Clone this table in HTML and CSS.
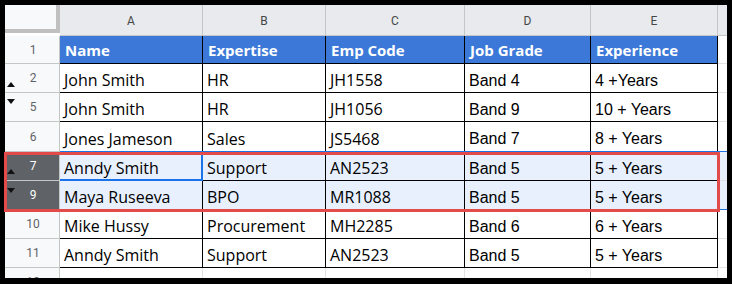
FILE: index.html
```html
<!DOCTYPE html>
<html>
<head>
<meta charset="utf-8">
<link rel="stylesheet" href="styles.css">
</head>
<body>
<div class="frame">
  <div class="sheet">
    <div class="grid">
      <div class="corner"></div>
      <div class="ch">A</div><div class="ch">B</div><div class="ch">C</div><div class="ch">D</div><div class="ch">E</div><div class="ch last"></div>

      <div class="rh">1</div>
      <div class="th">Name</div><div class="th">Expertise</div><div class="th">Emp Code</div><div class="th">Job Grade</div><div class="th">Experience</div><div class="x"></div>

      <div class="rh"><span class="tri up t2"></span>2</div>
      <div class="c">John Smith</div><div class="c">HR</div><div class="c">JH1558</div><div class="c ar">Band 4</div><div class="c ar">4 +Years</div><div class="x"></div>

      <div class="rh"><span class="tri down t5"></span>5</div>
      <div class="c">John Smith</div><div class="c">HR</div><div class="c">JH1056</div><div class="c ar">Band 9</div><div class="c ar">10 + Years</div><div class="x"></div>

      <div class="rh">6</div>
      <div class="c">Jones Jameson</div><div class="c">Sales</div><div class="c">JS5468</div><div class="c ar">Band 7</div><div class="c ar">8 + Years</div><div class="x"></div>

      <div class="rh sel"><span class="tri up t7"></span>7</div>
      <div class="c s active">Anndy Smith</div><div class="c s">Support</div><div class="c s">AN2523</div><div class="c ar s">Band 5</div><div class="c ar s">5 + Years</div><div class="x s"></div>

      <div class="rh sel"><span class="tri down t9"></span>9</div>
      <div class="c s">Maya Ruseeva</div><div class="c s">BPO</div><div class="c s">MR1088</div><div class="c ar s">Band 5</div><div class="c ar s">5 + Years</div><div class="x s"></div>

      <div class="rh">10</div>
      <div class="c">Mike Hussy</div><div class="c">Procurement</div><div class="c">MH2285</div><div class="c ar">Band 6</div><div class="c ar">6 + Years</div><div class="x"></div>

      <div class="rh">11</div>
      <div class="c">Anndy Smith</div><div class="c">Support</div><div class="c">AN2523</div><div class="c ar">Band 5</div><div class="c ar">5 + Years</div><div class="x"></div>

      <div class="rh">12</div>
      <div class="e"></div><div class="e"></div><div class="e"></div><div class="e"></div><div class="e"></div><div class="x"></div>
    </div>
    <div class="selection"></div>
  </div>
  <div class="highlight"></div>
</div>
</body>
</html>
```

FILE: styles.css
```css
html, body {
  margin: 0;
  padding: 0;
  background: #000;
}

.frame {
  position: relative;
  width: 732px;
  height: 284px;
  box-sizing: border-box;
  padding: 5px 5px 6px 5px;
  background: #000;
}

.sheet {
  position: relative;
  width: 722px;
  height: 273px;
  overflow: hidden;
  background: #fff;
}

.grid {
  display: grid;
  grid-template-columns: 55px 143px 123px 139px 126px 127px 9px;
  grid-template-rows: 31px 28px 29px 29px 30px 29px 29px 29px 29px 29px;
}

.grid > div {
  box-sizing: border-box;
}

.corner {
  background: #f8f9fa;
  border-right: 4px solid #c0c0c0;
  border-bottom: 4px solid #c0c0c0;
  margin-bottom: 3px;
}

.ch {
  display: flex;
  align-items: center;
  justify-content: center;
  background: #e8eaed;
  border-right: 1px solid #c4c7c5;
  border-bottom: 1px solid #c4c7c5;
  font-family: Roboto, "Liberation Sans", sans-serif;
  font-size: 12px;
  color: #444746;
  padding-top: 1px;
}

.ch.last {
  border-right: none;
}

.rh {
  position: relative;
  display: flex;
  align-items: center;
  justify-content: center;
  background: #f8f9fa;
  border-right: 1px solid #c4c7c5;
  border-bottom: 1px solid #c4c7c5;
  font-family: Roboto, "Liberation Sans", sans-serif;
  font-size: 12px;
  color: #5f6368;
  padding-left: 2px;
}

.rh.sel {
  background: #5f6368;
  color: #fff;
}

.tri {
  position: absolute;
  left: 2px;
  width: 0;
  height: 0;
  border-left: 4px solid transparent;
  border-right: 4px solid transparent;
}

.tri.up {
  border-bottom: 5px solid #111;
}

.tri.down {
  border-top: 5px solid #111;
}

.t2 { top: 18px; }
.t5 { top: 6px; }
.t7 { top: 17px; }
.t9 { top: 7px; }

.th {
  display: flex;
  align-items: center;
  padding: 1px 0 0 5px;
  background: #3c78d8;
  border-right: 1px solid #000;
  border-bottom: 1px solid #000;
  font-family: "Open Sans", Lato, sans-serif;
  font-weight: 700;
  font-size: 15px;
  color: #fff;
}

.c {
  display: flex;
  align-items: center;
  padding: 4px 0 0 4px;
  background: #fff;
  border-right: 1px solid #000;
  border-bottom: 1px solid #000;
  font-family: "Open Sans", Lato, sans-serif;
  font-size: 16px;
  color: #000;
  white-space: nowrap;
}

.c.ar {
  font-family: "Liberation Sans", Arial, sans-serif;
  font-size: 16px;
  padding-top: 5px;
}

.c.s, .x.s {
  background: #e8f0fe;
}

.c.active {
  border-right-color: #1a73e8;
  border-bottom-color: #1a73e8;
  box-shadow: inset -1px -1px 0 #1a73e8;
}

.e {
  border-right: 1px solid #e2e3e3;
  border-bottom: 1px solid #e2e3e3;
}

.x {
  background: #fff;
  border-bottom: 1px solid #e2e3e3;
}

.selection {
  position: absolute;
  left: 55px;
  right: 0;
  top: 146px;
  height: 59px;
  box-sizing: border-box;
  border-top: 1px solid #1a73e8;
  border-bottom: 1px solid #1a73e8;
  pointer-events: none;
}

.highlight {
  position: absolute;
  left: 4px;
  top: 152px;
  width: 716px;
  height: 60px;
  box-sizing: border-box;
  border: 3px solid #e34a4a;
  pointer-events: none;
}
```
